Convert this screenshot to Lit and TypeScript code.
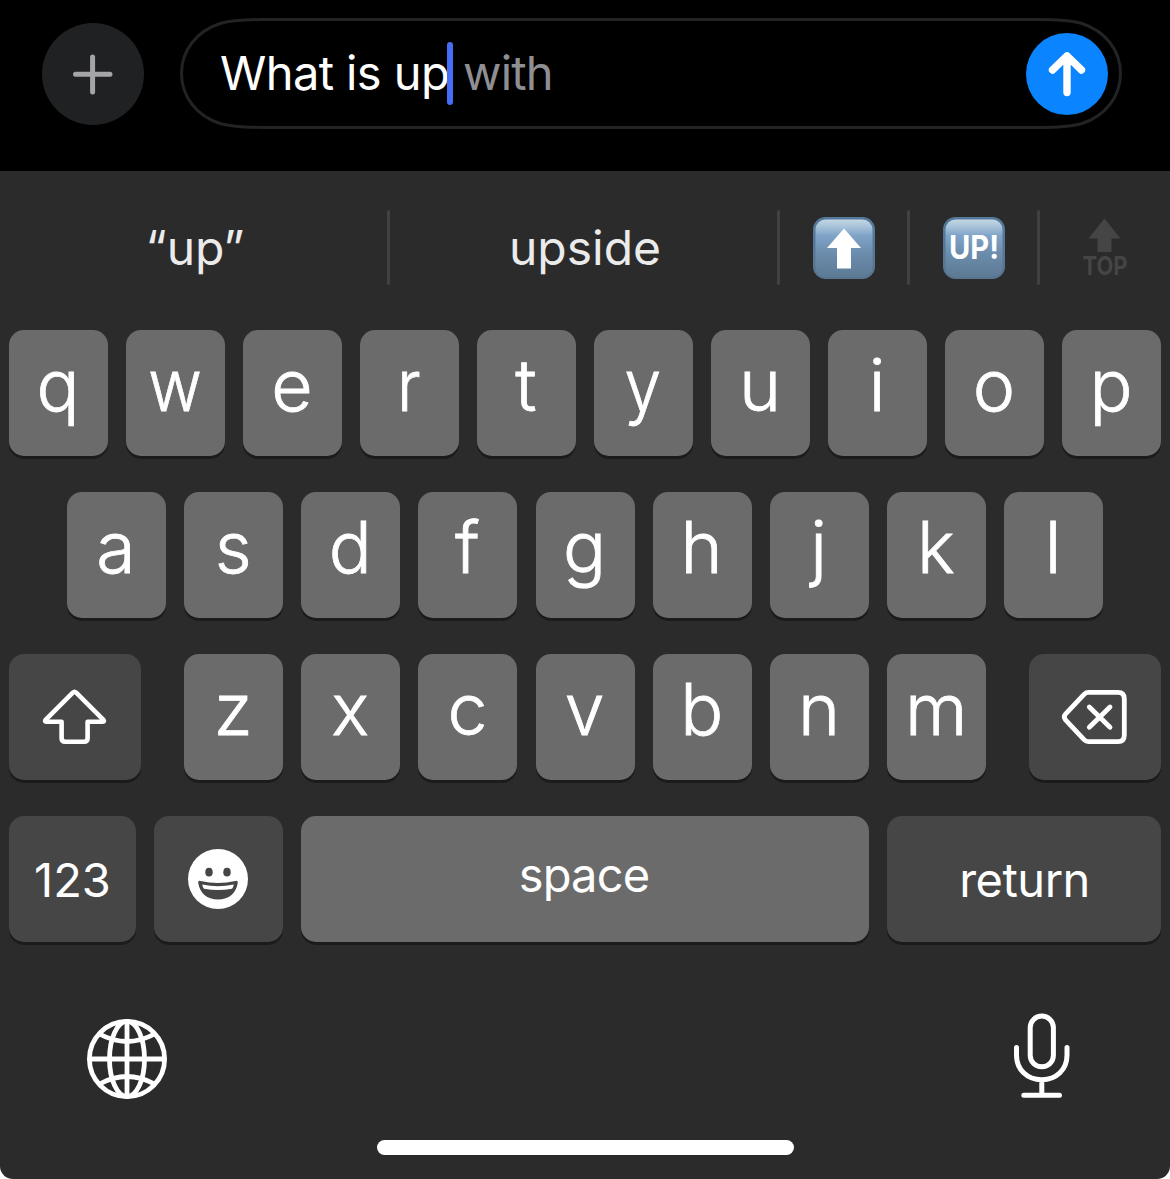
import { LitElement, html, css, svg } from "lit";
import { customElement, property } from "lit/decorators.js";

@customElement("key-cap")
class KeyCap extends LitElement {
  @property() label = "";
  @property() kind = "letter";

  static styles = css`
    :host {
      display: flex;
      flex: none;
      width: 99px;
      height: 126px;
    }
    .cap {
      flex: 1;
      display: flex;
      align-items: center;
      justify-content: center;
      box-sizing: border-box;
      border-radius: 15px;
      background: #6b6b6b;
      box-shadow: 0 3px 0 #1b1b1b;
      color: #fff;
      font-family: Inter, "Liberation Sans", sans-serif;
      white-space: pre;
    }
    .letter {
      font-size: 71.5px;
      font-weight: 300;
      -webkit-text-stroke: 0.8px #fff;
      padding: 0 1px 16px 0;
    }
    .narrow {
      display: inline-block;
      transform: scaleX(0.92);
    }
    .space {
      font-size: 47px;
      letter-spacing: -0.8px;
      padding: 0 2px 10px 0;
    }
    .dark {
      background: #464646;
      font-size: 47px;
    }
    .face {
      padding-right: 1px;
    }
    .return {
      letter-spacing: -0.5px;
      padding-left: 1px;
    }
  `;

  render() {
    const text = "wry".includes(this.label) && this.label ? html`<span class="narrow">${this.label}</span>` : this.label;
    return html`<div class="cap ${this.kind} ${this.label === "return" ? "return" : ""}">${text}<slot></slot></div>`;
  }
}

@customElement("app-root")
class AppRoot extends LitElement {
  static styles = css`
    :host {
      display: block;
      width: 1170px;
      height: 1179px;
      background: #fff;
      font-family: Inter, "Liberation Sans", sans-serif;
      overflow: hidden;
    }
    svg {
      display: block;
      flex: none;
    }
    .screen {
      display: flex;
      flex-direction: column;
      height: 1179px;
      border-radius: 0 0 13px 13px;
      overflow: hidden;
      background: #2b2b2b;
    }
    .compose {
      display: flex;
      align-items: flex-start;
      height: 171px;
      flex: none;
      box-sizing: border-box;
      padding: 18px 48px 0 42px;
      background: #000;
    }
    .plus {
      margin: 5px 36px 0 0;
    }
    .field {
      position: relative;
      display: flex;
      align-items: center;
      width: 942px;
      height: 111px;
      box-sizing: border-box;
      padding: 0 14px 0 40px;
      font-size: 47px;
      color: #fff;
    }
    .outline {
      position: absolute;
      inset: 0;
    }
    .typed {
      letter-spacing: -0.6px;
      width: 227px;
      padding-bottom: 2px;
      white-space: pre;
    }
    .caret {
      width: 6px;
      height: 63px;
      border-radius: 3px;
      background: #456df5;
    }
    .ghost {
      flex: 1;
      margin-left: 10px;
      padding-bottom: 2px;
      color: #8e8e93;
      letter-spacing: -0.8px;
    }
    .suggestions {
      display: flex;
      align-items: center;
      height: 75px;
      flex: none;
      margin-top: 39px;
      color: #ebebeb;
      font-size: 48px;
    }
    .word {
      display: flex;
      justify-content: center;
      box-sizing: border-box;
      padding-left: 3px;
      width: 387px;
    }
    .rule {
      width: 3px;
      height: 75px;
      border-radius: 2px;
      background: #414141;
    }
    .emoji {
      display: flex;
      justify-content: center;
      box-sizing: border-box;
      padding-left: 1px;
      width: 127px;
    }
    .keys {
      display: flex;
      flex-direction: column;
      gap: 36px;
      margin-top: 45px;
      padding: 0 9px;
    }
    .row {
      display: flex;
      justify-content: space-between;
    }
    .home {
      padding: 0 58px;
    }
    .middle {
      display: flex;
      justify-content: space-between;
      width: 802px;
      margin-left: 0.3px;
    }
    .wide {
      width: 132px;
    }
    .num {
      width: 127px;
    }
    .smile {
      width: 129px;
    }
    .bar {
      width: 568px;
    }
    .ret {
      width: 274px;
    }
    .footer {
      display: flex;
      justify-content: space-between;
      margin-top: 58px;
      padding: 0 80px;
    }
    .indicator {
      width: 417px;
      height: 15px;
      margin: 30px auto 0 377px;
      border-radius: 8px;
      background: #fff;
    }
  `;

  private letters(text: string) {
    return [...text].map((c) => html`<key-cap label=${c}></key-cap>`);
  }

  private tile(content: unknown) {
    return html`<svg width="64" height="64" viewBox="0 0 64 64">
      <defs>
        <linearGradient id="face" x1="0" y1="0" x2="0" y2="1">
          <stop offset="0" stop-color="#c3d6e4" />
          <stop offset="0.12" stop-color="#a9c4da" />
          <stop offset="0.28" stop-color="#7fa4c8" />
          <stop offset="0.6" stop-color="#6b8cab" />
          <stop offset="1" stop-color="#5d7a95" />
        </linearGradient>
        <linearGradient id="rim" x1="0" y1="0" x2="0" y2="1">
          <stop offset="0" stop-color="#56799b" />
          <stop offset="1" stop-color="#587590" />
        </linearGradient>
      </defs>
      <rect x="1" y="1" width="62" height="62" rx="12.5" fill="url(#rim)" />
      <rect x="3.5" y="3.5" width="57" height="57.5" rx="10" fill="url(#face)" />
      ${content}
    </svg>`;
  }

  render() {
    return html`
      <div class="screen">
        <div class="compose">
          <svg class="plus" width="102" height="102" viewBox="42 23 102 102">
            <circle cx="93" cy="74" r="51" fill="#202123" />
            <path d="M75.5 74.3H110M92.6 57V92" stroke="#a5a5a8" stroke-width="5" stroke-linecap="round" />
          </svg>
          <div class="field">
            <svg class="outline" width="942" height="111" viewBox="0 0 942 111" fill="none" stroke="#222325" stroke-width="3">
              <path d="M84 1.5H858C882 1.5 893 3 902 5.5C925 13 940.5 32 940.5 55.5S925 98 902 105.500C893 108 882 109.500 858 109.500H84C60 109.500 49 108 40 105.500C17 98 1.500 79 1.500 55.500S17 13 40 5.500C49 3 60 1.500 84 1.500Z" />
            </svg>
            <span class="typed">What is up</span><span class="caret"></span><span class="ghost">with</span>
            <svg width="82" height="82" viewBox="1026 33 82 82">
              <circle cx="1067" cy="74" r="41" fill="#0b84ff" />
              <path d="M1067 92.5V56M1052.5 70L1067 55.8L1081.500 70" fill="none" stroke="#fff" stroke-width="7.4" stroke-linecap="round" stroke-linejoin="round" />
            </svg>
          </div>
        </div>

        <div class="suggestions">
          <span class="word">“up”</span>
          <span class="rule"></span>
          <span class="word">upside</span>
          <span class="rule"></span>
          <span class="emoji">${this.tile(svg`<path d="M32 12.5L49 32H39V52.500H25V32H15Z" fill="#fff" />`)}</span>
          <span class="rule"></span>
          <span class="emoji">${this.tile(svg`<text x="32" y="43" text-anchor="middle" textLength="50" lengthAdjust="spacingAndGlyphs" font-size="32" font-weight="700" fill="#fff">UP!</text>`)}</span>
          <span class="rule"></span>
          <span class="emoji">
            <svg width="60" height="64" viewBox="1074 216 60 64" fill="#454545">
              <path d="M1104.500 218.500L1120.500 238.500H1111.500V252H1097.500V238.500H1088.500Z" />
              <text x="1105" y="275" text-anchor="middle" textLength="45" lengthAdjust="spacingAndGlyphs" font-size="25.500" font-weight="700">TOP</text>
            </svg>
          </span>
        </div>

        <div class="keys">
          <div class="row">${this.letters("qwertyuiop")}</div>
          <div class="row home">${this.letters("asdfghjkl")}</div>
          <div class="row">
            <key-cap class="wide" kind="dark">
              <svg width="70" height="60" viewBox="40 687 70 60" fill="none" stroke="#fff" stroke-width="4.600" stroke-linejoin="round">
                <path d="M72.800 692.600L45.800 719.600Q44 721.700 46.500 721.700H61.600V738Q61.600 741.700 65.300 741.700H84Q87.600 741.700 87.600 738V721.700H102.500Q105 721.700 103.200 719.600L76.200 692.600Q74.500 691 72.800 692.600Z" />
              </svg>
            </key-cap>
            <div class="middle">${this.letters("zxcvbnm")}</div>
            <key-cap class="wide" kind="dark">
              <svg width="70" height="60" viewBox="1060 687 70 60" fill="none" stroke="#fff" stroke-width="4.800" stroke-linejoin="round" stroke-linecap="round">
                <path d="M1088.500 692.400H1118Q1124.300 692.400 1124.300 698.700V735.300Q1124.300 741.600 1118 741.600H1088.500Q1086 741.600 1084.300 739.900L1065.700 720.200Q1063 717 1065.700 713.800L1084.300 694.100Q1086 692.400 1088.500 692.400Z" />
                <path d="M1089.300 707L1110 727.200M1110 707L1089.300 727.200" />
              </svg>
            </key-cap>
          </div>
          <div class="row">
            <key-cap class="num" kind="dark" label="123"></key-cap>
            <key-cap class="smile" kind="dark face">
              <svg width="60" height="60" viewBox="188 849 60 60">
                <circle cx="218" cy="879" r="30" fill="#fff" />
                <ellipse cx="209" cy="872.200" rx="3.700" ry="4.400" fill="#464646" />
                <ellipse cx="227" cy="872.200" rx="3.700" ry="4.400" fill="#464646" />
                <path d="M198.200 882.500Q198 880.300 200.500 880.900Q218 885 235.500 880.900Q238 880.300 237.800 882.500C236.500 893 229 899.500 218 899.500S199.500 893 198.200 882.500Z" fill="#464646" />
                <path d="M202.200 884.500Q218 887.800 233.800 884.500Q233.500 887 232 888.700Q218 891.500 204 888.700Q202.500 887 202.200 884.500Z" fill="#fff" />
              </svg>
            </key-cap>
            <key-cap class="bar" kind="space" label="space"></key-cap>
            <key-cap class="ret" kind="dark" label="return"></key-cap>
          </div>
        </div>

        <div class="footer">
          <svg width="94" height="110" viewBox="80 1000 94 110" fill="none" stroke="#fff" stroke-width="4.800">
            <circle cx="127" cy="1059" r="37.600" />
            <ellipse cx="127" cy="1059" rx="17.500" ry="37.600" />
            <path d="M127 1021V1097M89 1059H165M99.500 1034Q127 1049 154.500 1034M99.500 1084Q127 1069 154.500 1084" />
          </svg>
          <svg width="96" height="110" viewBox="994 1000 96 110" fill="none" stroke="#fff" stroke-width="5" stroke-linecap="round">
            <rect x="1030.200" y="1016" width="23.200" height="50.800" rx="11.600" />
            <path d="M1016.500 1047.500V1055C1016.500 1069.500 1027 1079.700 1041.800 1079.700S1067 1069.500 1067 1055V1047.500M1041.800 1080V1095M1023.800 1095.300H1059.500" />
          </svg>
        </div>
        <div class="indicator"></div>
      </div>
    `;
  }
}
